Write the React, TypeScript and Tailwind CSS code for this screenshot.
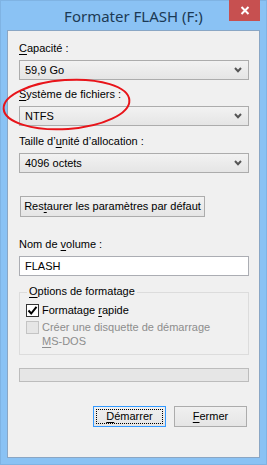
import React from "react";

const font = { fontFamily: '"Liberation Sans", Arial, sans-serif' };

function U({ children }: { children: React.ReactNode }) {
  return <span className="underline underline-offset-[2px] decoration-[1px]">{children}</span>;
}

function Chevron() {
  return (
    <svg width="8" height="6" viewBox="0 0 8 6" className="shrink-0">
      <path d="M1 1 L4 4.2 L7 1" fill="none" stroke="#555" strokeWidth="2" />
    </svg>
  );
}

function Select({ value }: { value: string }) {
  return (
    <div className="h-[20px] w-[230px] border border-[#acacac] bg-gradient-to-b from-[#f2f2f2] to-[#e5e5e5] flex items-center pl-[5px] pr-[6px] justify-between text-[11px] text-black">
      <span>{value}</span>
      <Chevron />
    </div>
  );
}

function Label({ children }: { children: React.ReactNode }) {
  return <div className="h-[15px] leading-[15px] text-[11px] text-black mb-[4px]">{children}</div>;
}

export default function App() {
  return (
    <div style={font} className="relative w-[267px] h-[465px] bg-[#8ac2f4] border border-[#7fb3e3] flex flex-col">
      <div className="relative h-[29px] flex items-center justify-center shrink-0">
        <span className="text-[15px] text-[#1c3a55] mt-[1px]" style={{ fontFamily: '"Noto Sans", "Liberation Sans", sans-serif' }}>Formater FLASH (F:)</span>
        <div className="absolute right-[6px] top-[-1px] w-[31px] h-[21px] bg-[#c75050] flex items-center justify-center">
          <svg width="10" height="9" viewBox="0 0 10 9">
            <path d="M1.5 1 L8.5 8 M8.5 1 L1.5 8" stroke="#fff" strokeWidth="2" />
          </svg>
        </div>
      </div>
      <div className="mx-[6px] mb-[6px] flex-1 border border-[#8aa6c4] bg-[#f0f0f0] flex flex-col pl-[11px] pt-[10px]">
        <Label><U>C</U>apacité :</Label>
        <Select value="59,9 Go" />
        <div className="h-[7px]" />
        <Label><U>S</U>ystème de fichiers :</Label>
        <Select value="NTFS" />
        <div className="h-[8px]" />
        <Label>Taille d’<U>u</U>nité d’allocation :</Label>
        <Select value="4096 octets" />
        <div className="h-[23px]" />
        <div className="ml-[1px] h-[21px] w-[185px] border border-[#acacac] bg-gradient-to-b from-[#f2f2f2] to-[#e5e5e5] flex items-center justify-center text-[11px] text-black">
          <span>Res<U>t</U>aurer les paramètres par défaut</span>
        </div>
        <div className="h-[20px]" />
        <Label>Nom de <U>v</U>olume :</Label>
        <div className="h-[20px] w-[230px] border border-[#abadb3] bg-white flex items-center pl-[5px] text-[11px] text-black">FLASH</div>
        <div className="h-[10px]" />
        <div className="relative w-[230px] h-[63px] border border-[#dcdcdc] mt-[6px] pl-[6px] pt-[10px]">
          <div className="absolute left-[7px] top-[-9px] bg-[#f0f0f0] px-[2px] text-[11px] leading-[15px] text-black">
            <U>O</U>ptions de formatage
          </div>
          <div className="flex items-center gap-[3px] h-[14px]">
            <div className="w-[13px] h-[13px] border border-[#333] bg-white flex items-center justify-center">
              <svg width="11" height="11" viewBox="0 0 11 11">
                <path d="M1.5 5.5 L4.2 8.5 L9.5 1.8" fill="none" stroke="#000" strokeWidth="2" />
              </svg>
            </div>
            <span className="text-[11px] text-black">Formatage <U>r</U>apide</span>
          </div>
          <div className="flex items-start gap-[3px] mt-[3px]">
            <div className="w-[13px] h-[13px] border border-[#c4c4c4] bg-[#e6e6e6] mt-[1px] shrink-0" />
            <span className="text-[11px] leading-[14px] text-[#8d8d8d]">Créer une disquette de démarrage<br /><U>M</U>S-DOS</span>
          </div>
        </div>
        <div className="h-[13px]" />
        <div className="w-[230px] h-[14px] border border-[#bcbcbc] bg-[#e6e6e6]" />
        <div className="flex-1" />
        <div className="flex gap-[8px] pl-[74px] mb-[30px]">
          <div className="relative w-[73px] h-[21px] border border-[#3399ff] bg-gradient-to-b from-[#f0f0f0] to-[#e5e5e5] flex items-center justify-center text-[11px] text-black">
            <div className="absolute inset-[2px] border border-dotted border-black" />
            <span><U>D</U>émarrer</span>
          </div>
          <div className="w-[73px] h-[21px] border border-[#acacac] bg-gradient-to-b from-[#f0f0f0] to-[#e5e5e5] flex items-center justify-center text-[11px] text-black">
            <span><U>F</U>ermer</span>
          </div>
        </div>
      </div>
      <svg className="absolute left-0 top-0 pointer-events-none" width="267" height="465">
        <ellipse cx="65.5" cy="103.5" rx="63" ry="24.5" fill="none" stroke="#e8141a" strokeWidth="2" transform="rotate(-4 65.5 103.5)" />
      </svg>
    </div>
  );
}
